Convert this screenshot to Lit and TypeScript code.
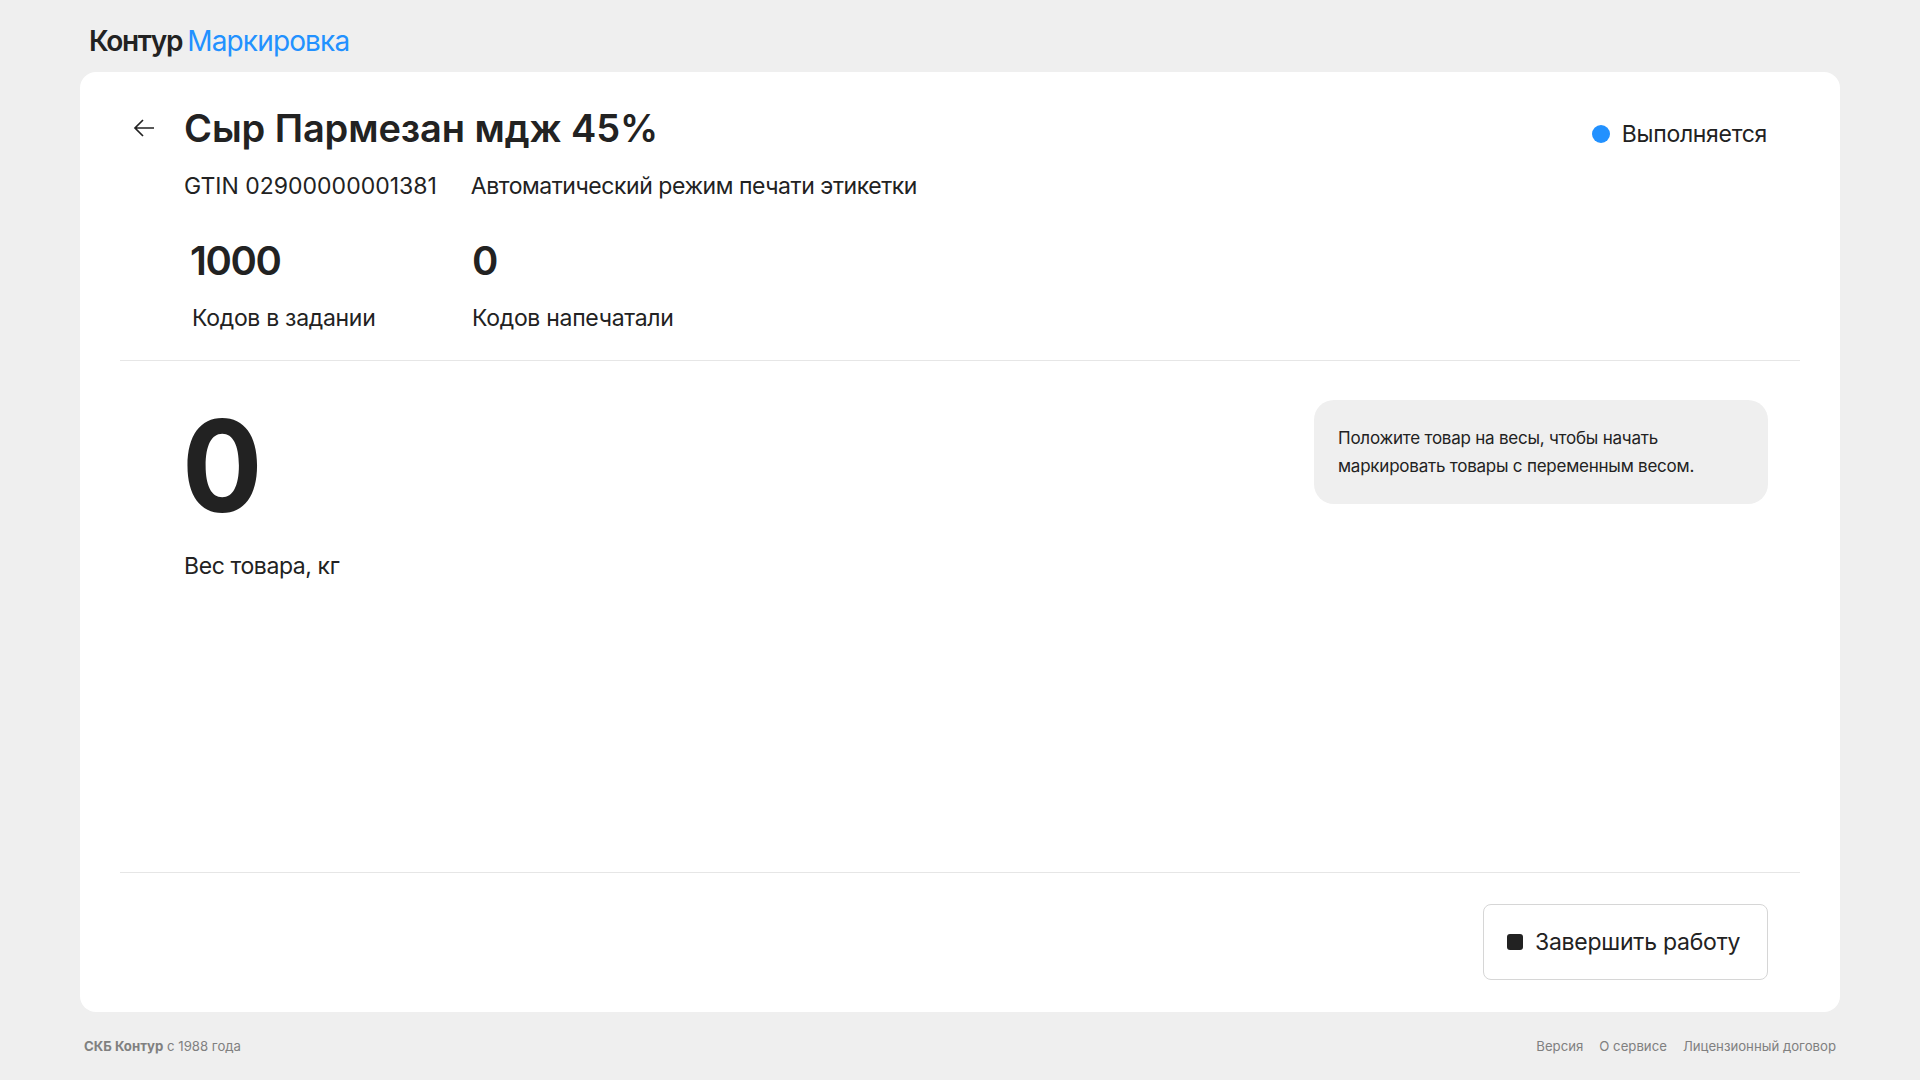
import { LitElement, html, css } from "lit";
import { customElement } from "lit/decorators.js";

@customElement("app-root")
export class AppRoot extends LitElement {
  static styles = css`
    :host { display: block; width: 1920px; height: 1080px; background: #efefef; color: #222; font-family: Inter, "Noto Sans", sans-serif; overflow: hidden; }
    .page { display: flex; flex-direction: column; height: 1080px; box-sizing: border-box; padding: 0 80px; }
    .logo { height: 72px; flex: none; display: flex; align-items: center; gap: 5px; padding-left: 9px; padding-top: 10px; box-sizing: border-box; font-size: 28px; letter-spacing: -0.85px; }
    .logo b { font-weight: 600; letter-spacing: -1.3px; }
    .logo span { color: #2291ff; }
    .card { height: 940px; flex: none; background: #fff; border-radius: 16px; display: flex; flex-direction: column; padding: 0 40px; box-sizing: border-box; }
    .top { height: 289px; flex: none; box-sizing: border-box; border-bottom: 1px solid #e6e6e6; display: flex; flex-direction: column; padding-top: 32px; }
    .title-row { display: flex; align-items: center; height: 48px; padding-left: 12px; }
    .back { width: 24px; height: 24px; margin-right: 28px; flex: none; }
    h1 { margin: 0; font-size: 38px; font-weight: 600; line-height: 48px; letter-spacing: -0.1px; flex: 1; }
    .status { display: flex; align-items: center; gap: 12px; font-size: 23px; letter-spacing: -0.3px; margin-right: 33px; margin-top: 12px; }
    .dot { width: 18px; height: 18px; border-radius: 50%; background: #2291ff; }
    .meta { display: flex; gap: 34px; padding-left: 64px; margin-top: 18px; font-size: 23px; line-height: 32px; }
    .meta .ru { letter-spacing: -0.45px; }
    .stats { display: flex; margin-top: 35px; }
    .stat { display: flex; flex-direction: column; }
    .stat.a { margin-left: 70px; width: 282px; }
    .num { font-size: 40px; font-weight: 600; line-height: 48px; letter-spacing: -1.4px; }
    .lbl { font-size: 23px; line-height: 32px; margin-top: 17px; letter-spacing: -0.3px; }
    .stat.a .lbl { margin-left: 2px; }
    .mid { flex: 1; min-height: 0; display: flex; justify-content: space-between; align-items: flex-start; padding: 39px 32px 0 64px; border-bottom: 1px solid #e6e6e6; }
    .big { font-size: 127px; font-weight: 700; line-height: 160px; margin: -14px 0 0 -2px; transform: scaleX(0.94); transform-origin: left center; }
    .big-lbl { font-size: 23px; line-height: 32px; margin-top: 4px; letter-spacing: -0.4px; }
    .info { width: 454px; height: 104px; box-sizing: border-box; background: #efefef; border-radius: 20px; padding: 24px; font-size: 17px; letter-spacing: -0.23px; line-height: 28px; color: #222; }
    .bottom { height: 139px; flex: none; display: flex; justify-content: flex-end; align-items: flex-start; padding: 31px 32px 0 0; box-sizing: border-box; }
    .btn { width: 285px; height: 76px; box-sizing: border-box; border: 1px solid #d6d6d6; border-radius: 8px; background: #fff; display: flex; align-items: center; gap: 12px; padding-left: 23px; font: inherit; font-size: 23px; letter-spacing: -0.25px; color: #222; }
    .stop { width: 16px; height: 16px; border-radius: 3px; background: #222; flex: none; }
    .footer { flex: 1; display: flex; justify-content: space-between; align-items: center; padding: 0 4px; font-size: 13.2px; color: #808080; }
    .footer b { font-weight: 700; }
    .links { display: flex; gap: 16px; }
  `;

  render() {
    return html`
      <div class="page">
        <div class="logo"><b>Контур</b><span>Маркировка</span></div>
        <div class="card">
          <div class="top">
            <div class="title-row">
              <svg class="back" viewBox="0 0 24 24" fill="none" stroke="#222" stroke-width="1.7">
                <path d="M22 12H3M11 4l-8 8 8 8" />
              </svg>
              <h1>Сыр Пармезан мдж 45%</h1>
              <div class="status"><i class="dot"></i>Выполняется</div>
            </div>
            <div class="meta"><span>GTIN 02900000001381</span><span class="ru">Автоматический режим печати этикетки</span></div>
            <div class="stats">
              <div class="stat a"><div class="num">1000</div><div class="lbl">Кодов в задании</div></div>
              <div class="stat"><div class="num">0</div><div class="lbl">Кодов напечатали</div></div>
            </div>
          </div>
          <div class="mid">
            <div>
              <div class="big">0</div>
              <div class="big-lbl">Вес товара, кг</div>
            </div>
            <div class="info">Положите товар на весы, чтобы начать<br />маркировать товары с переменным весом.</div>
          </div>
          <div class="bottom">
            <button class="btn"><i class="stop"></i>Завершить работу</button>
          </div>
        </div>
        <div class="footer">
          <div><b>СКБ Контур</b> с 1988 года</div>
          <div class="links"><span>Версия</span><span>О сервисе</span><span>Лицензионный договор</span></div>
        </div>
      </div>
    `;
  }
}
